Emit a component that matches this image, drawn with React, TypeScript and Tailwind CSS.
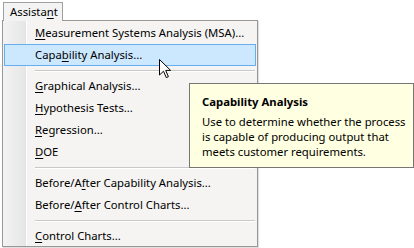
import React from "react";

type Item = { before: string; key: string; after: string; active?: boolean } | "sep";

const items: Item[] = [
  { before: "", key: "M", after: "easurement Systems Analysis (MSA)..." },
  { before: "Capa", key: "b", after: "ility Analysis...", active: true },
  "sep",
  { before: "", key: "G", after: "raphical Analysis..." },
  { before: "", key: "H", after: "ypothesis Tests..." },
  { before: "", key: "R", after: "egression..." },
  { before: "", key: "D", after: "OE" },
  "sep",
  { before: "Before/A", key: "f", after: "ter Capability Analysis..." },
  { before: "Before/", key: "A", after: "fter Control Charts..." },
  "sep",
  { before: "", key: "C", after: "ontrol Charts..." },
];

function Cursor() {
  return (
    <svg width="13" height="20" viewBox="0 0 13 20" className="absolute left-[159px] top-[59px]">
      <path
        d="M0.5 0.5 L0.5 16 L4.5 12.2 L7.3 18.6 L9.4 17.7 L6.7 11.4 L11.6 11.4 Z"
        fill="#fff"
        stroke="#000"
        strokeWidth="1"
        strokeLinejoin="miter"
      />
    </svg>
  );
}

export default function App() {
  return (
    <div className="relative h-[248px] w-[414px] overflow-hidden whitespace-nowrap bg-white font-['Noto_Sans',sans-serif] text-[11.3px] leading-none text-black">
      <div className="relative z-10 -mb-px ml-[3px] mt-[2px] flex h-[19px] w-[60px] items-center border border-b-0 border-[#a0a0a0] bg-[#f3f3f3] pl-[6px]">
        Assista<span className="underline underline-offset-2">n</span>t
      </div>
      <div className="ml-[2px] h-[227px] w-[256px] border border-[#979797] bg-[linear-gradient(to_right,#f3f3f3_0px,#e6e6e6_22px,#e2e3e3_22px,#e2e3e3_23px,#ffffff_23px,#ffffff_24px,#f5f4f2_24px)] pt-px shadow-[1px_1px_1px_rgba(0,0,0,0.12)]">
        {items.map((it, i) =>
          it === "sep" ? (
            <div key={i} className="flex h-[9px] items-center pl-[32px] pr-[2px]">
              <div className="h-[2px] w-full border-t border-b border-t-[#c8c8c8] border-b-white" />
            </div>
          ) : (
            <div
              key={i}
              className={
                it.active
                  ? "mx-px flex h-[22px] items-center border border-[#66aef0] bg-[#cce8ff] pl-[30px]"
                  : "mx-px flex h-[22px] items-center border border-transparent pl-[30px]"
              }
            >
              {it.before}
              <span className="underline underline-offset-2">{it.key}</span>
              {it.after}
            </div>
          )
        )}
      </div>
      <div className="absolute left-[189px] top-[83px] h-[85px] w-[225px] border border-[#767676] bg-[#ffffe1] pl-[12px] pt-[10px] leading-[15px]">
        <div className="font-bold">Capability Analysis</div>
        <div className="mt-[5px]">
          Use to determine whether the process
          <br />
          is capable of producing output that
          <br />
          meets customer requirements.
        </div>
      </div>
      <Cursor />
    </div>
  );
}
